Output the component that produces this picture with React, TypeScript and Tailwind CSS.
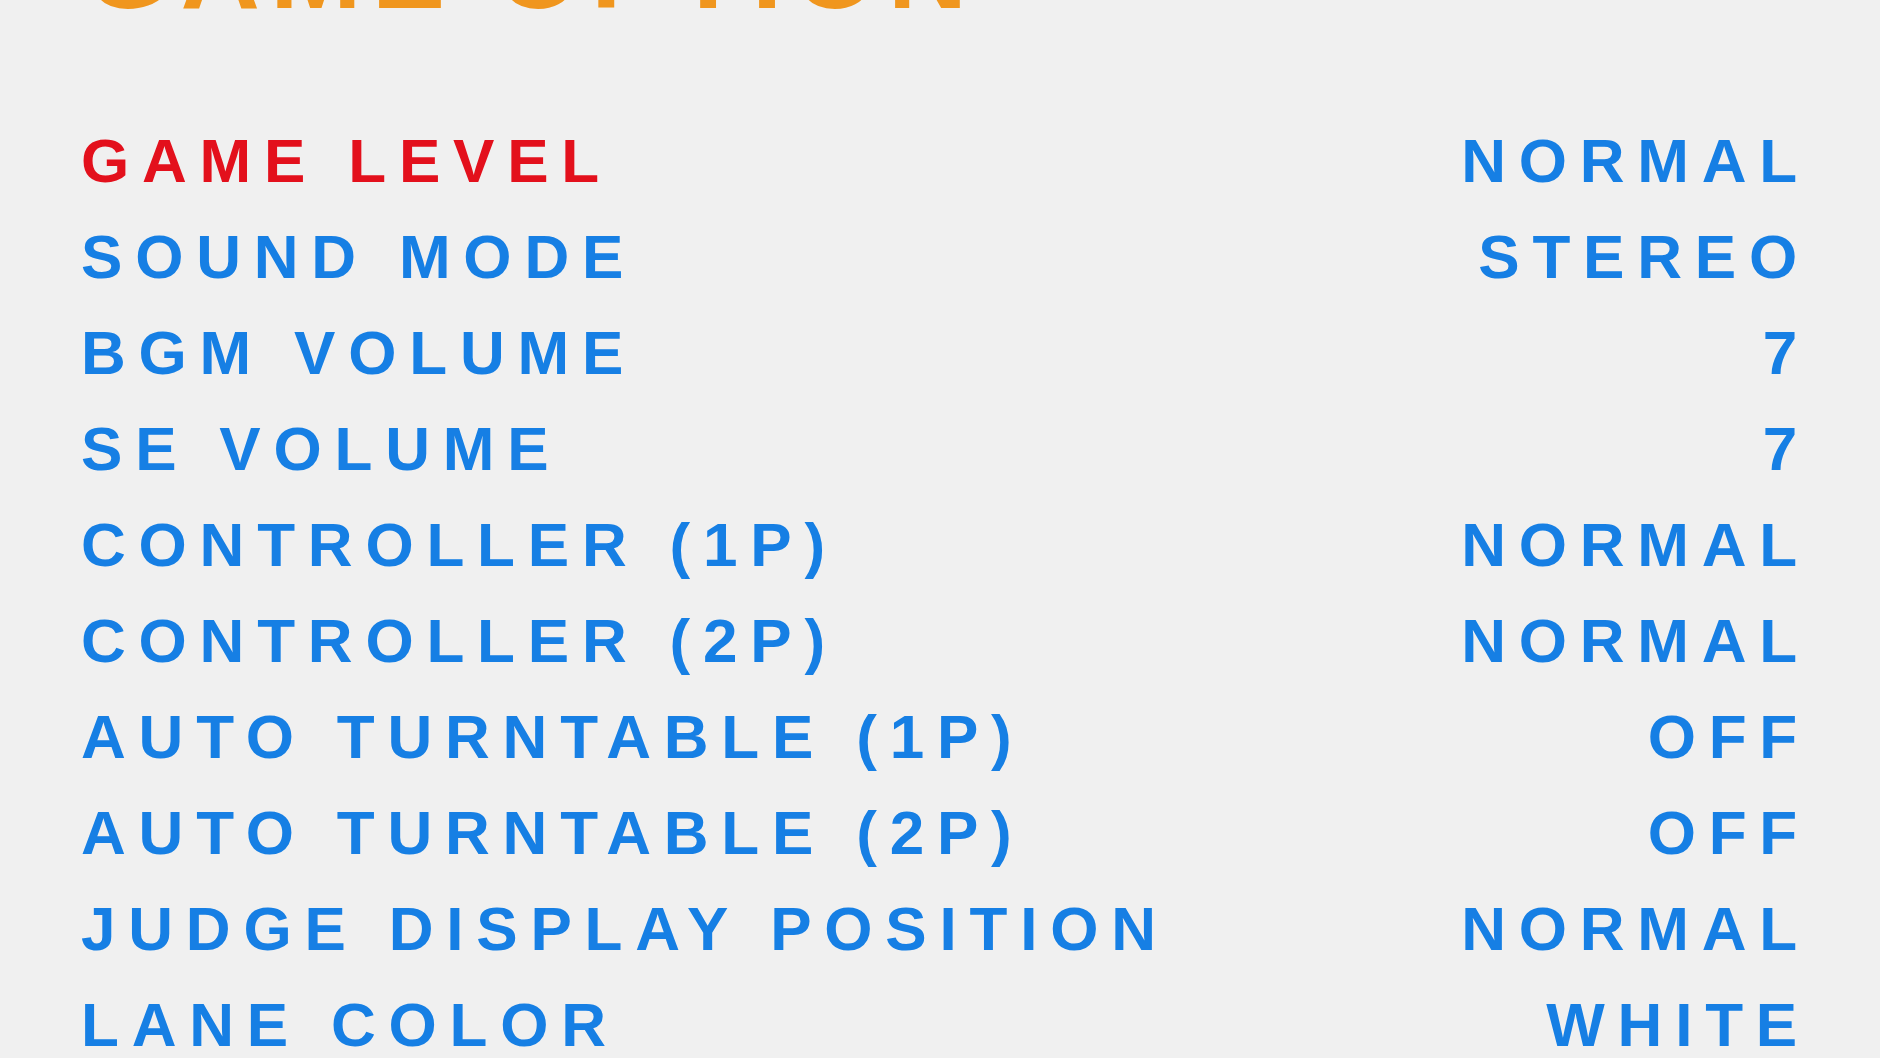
import React from "react";

type OptionRow = { label: string; value: string; active?: boolean };

const options: OptionRow[] = [
  { label: "GAME LEVEL", value: "NORMAL", active: true },
  { label: "SOUND MODE", value: "STEREO" },
  { label: "BGM VOLUME", value: "7" },
  { label: "SE VOLUME", value: "7" },
  { label: "CONTROLLER (1P)", value: "NORMAL" },
  { label: "CONTROLLER (2P)", value: "NORMAL" },
  { label: "AUTO TURNTABLE (1P)", value: "OFF" },
  { label: "AUTO TURNTABLE (2P)", value: "OFF" },
  { label: "JUDGE DISPLAY POSITION", value: "NORMAL" },
  { label: "LANE COLOR", value: "WHITE" },
];

export default function App() {
  return (
    <div
      className="w-[1880px] h-[1058px] overflow-hidden bg-[#f0f0f0] font-bold"
      style={{ fontFamily: '"Liberation Sans", Arial, sans-serif' }}
    >
      {/* Screen heading, scrolled mostly out of view */}
      <div className="mt-[-85px] mb-[88px] pl-[85px] text-[110px] leading-[110px] tracking-[10px] text-[#f0961e] whitespace-nowrap">
        GAME OPTION
      </div>

      <ul className="flex flex-col pl-[81px] pr-[70px]">
        {options.map((o) => (
          <li
            key={o.label}
            className="flex h-[96px] items-center justify-between text-[62px] leading-[96px] tracking-[12.8px] whitespace-nowrap text-[#167fe4]"
          >
            {/* the selected option's name is highlighted in red */}
            <span className={o.active ? "text-[#e3101c]" : ""}>{o.label}</span>
            <span>{o.value}</span>
          </li>
        ))}
      </ul>
    </div>
  );
}
